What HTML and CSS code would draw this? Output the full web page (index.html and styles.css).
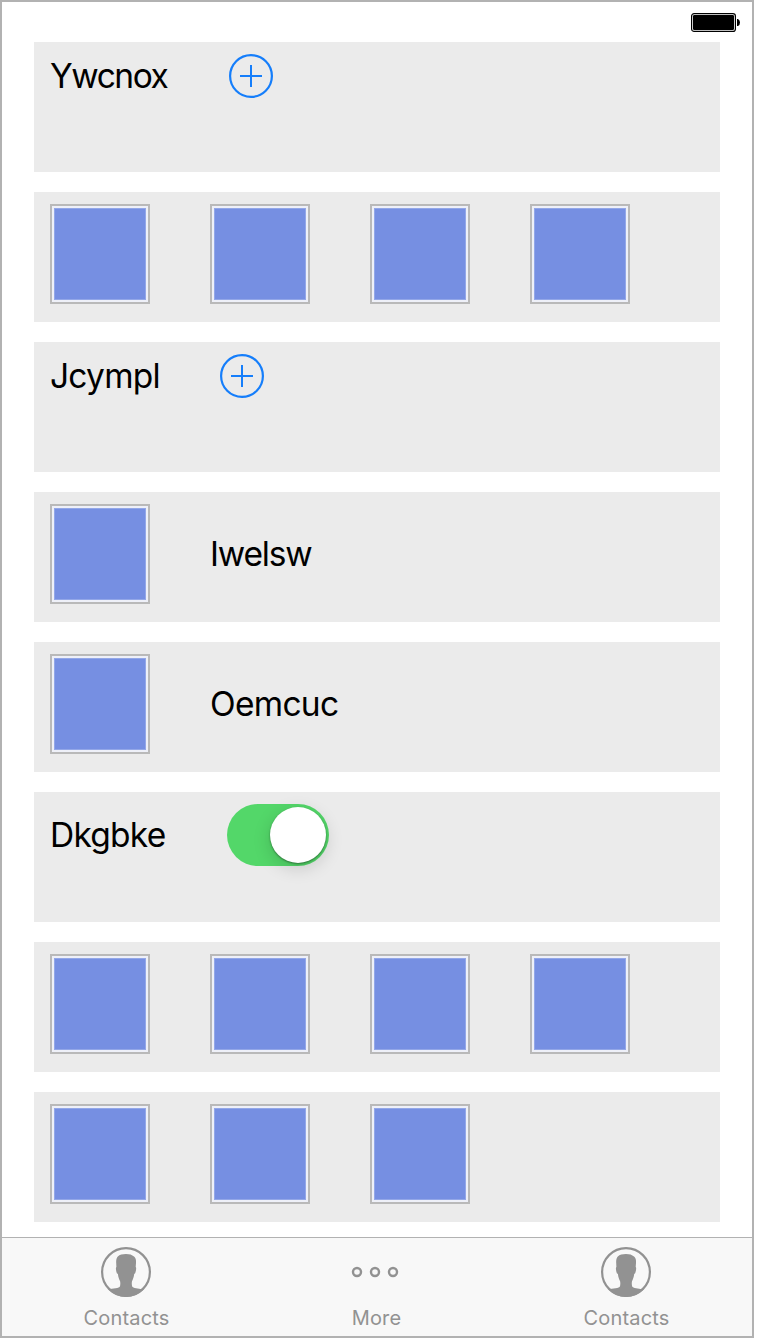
FILE: index.html
```html
<!DOCTYPE html>
<html lang="en">
<head>
<meta charset="utf-8">
<title>Stacks</title>
<link rel="stylesheet" href="styles.css">
</head>
<body>
<svg class="defs" width="0" height="0">
  <symbol id="add" viewBox="0 0 44 44">
    <circle cx="22" cy="22" r="20.900" fill="none" stroke="#157efb" stroke-width="2.200"/>
    <path d="M11 22H33M22 11V33" stroke="#157efb" stroke-width="2"/>
  </symbol>
  <symbol id="contact" viewBox="0 0 50 50">
    <circle cx="25" cy="25" r="23.900" fill="none" stroke="#929292" stroke-width="2.200"/>
    <path fill="#929292" d="M25 7c3.500 0 6 .8 8 2.500c1.800 1.500 2.200 3.500 2 6.500l-.3 4c.8.3.5 3-.3 5.500c-.3 1-.8 1.300-1.200 1.500c-.4 3-1.200 5.500-2.200 7.200c-.4 2-.2 3.800.1 5c.4 1.200 2 1.700 4 2.100l6 .9L43 42.300A25 25 0 0 1 7 42.300l2-.2l5.500-.9c2.500-.4 4.200-.7 4.500-2c.3-1.200.5-3 .1-5c-1-1.700-1.900-4.200-2.200-7.200c-.5-.2-1-.5-1.300-1.500c-.8-2.500-1-5.200-.2-5.500l-.2-4c-.2-3 .3-5 1.600-6.500c1.800-1.800 4.700-2.500 8.200-2.500z"/>
  </symbol>
</svg>
<main class="screen">
  <header class="status">
    <svg class="battery" width="49" height="19" viewBox="0 0 49 19">
      <rect x=".6" y=".6" width="43.800" height="17.800" rx="2.500" fill="#fff" stroke="#000" stroke-width="1.200"/>
      <rect x="2" y="2" width="41" height="15" rx="1.200"/>
      <path d="M46 6h1q2 1 2 3.500t-2 3.500h-1z"/>
    </svg>
  </header>
  <section class="rows">
    <div class="row"><span class="label ywcnox">Ywcnox</span><svg class="add"><use href="#add"/></svg></div>
    <div class="row"><i class="tile"></i><i class="tile"></i><i class="tile"></i><i class="tile"></i></div>
    <div class="row"><span class="label jcympl">Jcympl</span><svg class="add"><use href="#add"/></svg></div>
    <div class="row"><i class="tile"></i><span class="label iwelsw">Iwelsw</span></div>
    <div class="row"><i class="tile"></i><span class="label oemcuc">Oemcuc</span></div>
    <div class="row"><span class="label dkgbke">Dkgbke</span><span class="switch"><i class="knob"></i></span></div>
    <div class="row"><i class="tile"></i><i class="tile"></i><i class="tile"></i><i class="tile"></i></div>
    <div class="row"><i class="tile"></i><i class="tile"></i><i class="tile"></i></div>
  </section>
  <nav class="tabs">
    <div class="tab"><svg class="tab-icon"><use href="#contact"/></svg><span class="tab-label">Contacts</span></div>
    <div class="tab"><svg class="tab-icon" viewBox="0 0 50 50"><g fill="none" stroke="#929292" stroke-width="2.400"><circle cx="7" cy="25" r="4"/><circle cx="25" cy="25" r="4"/><circle cx="43" cy="25" r="4"/></g></svg><span class="tab-label more">More</span></div>
    <div class="tab"><svg class="tab-icon"><use href="#contact"/></svg><span class="tab-label">Contacts</span></div>
  </nav>
</main>
</body>
</html>
```
FILE: styles.css
```css
* { box-sizing: border-box; }
body { margin: 0; background: #fff; font-family: Inter, "Liberation Sans", sans-serif; }
.defs { display: none; }
.screen { display: flex; flex-direction: column; width: 754px; height: 1338px; border: 2px solid #b2b2b2; }
.status { display: flex; justify-content: flex-end; height: 40px; padding: 11px 12px 0 0; }
.rows { display: flex; flex-direction: column; gap: 20px; flex: 1; padding: 0 32px; }
.row { display: flex; align-items: flex-start; gap: 60px; width: 686px; height: 130px; padding: 12px 16px; background: #ebebeb; }
.label { font-size: 33.5px; line-height: 44px; white-space: nowrap; color: #000; }
.ywcnox { width: 119px; letter-spacing: -1.45px; }
.jcympl { width: 110px; letter-spacing: -0.75px; }
.iwelsw { line-height: 100px; letter-spacing: -1.2px; }
.oemcuc { line-height: 100px; letter-spacing: -0.7px; }
.dkgbke { width: 117px; line-height: 62px; letter-spacing: -0.75px; }
.add { width: 44px; height: 44px; }
.tile { width: 100px; height: 100px; padding: 2px; border: 2px solid #b9b9b9; background: #768fe2; box-shadow: inset 0 0 0 2px #eef0f8, inset 0 0 0 3px #93a7e8; }
.switch { display: flex; justify-content: flex-end; width: 102px; height: 62px; padding: 3px; border-radius: 31px; background: #53d769; }
.knob { width: 56px; height: 56px; border-radius: 50%; background: #fff; box-shadow: 0 1px 2px rgba(0,0,0,.4), 0 5px 18px rgba(0,0,0,.16); }
.tabs { display: grid; grid-template-columns: 248px 250px 252px; height: 99px; border-top: 1px solid #b2b2b2; background: #f8f8f8; }
.tab { display: flex; flex-direction: column; align-items: center; padding-top: 9px; }
.tab-icon { width: 50px; height: 50px; }
.tab-label { margin-top: 9px; margin-left: 1px; font-size: 20px; line-height: 24px; letter-spacing: 0.2px; color: #929292; }
.more { margin-left: 3px; }
```
